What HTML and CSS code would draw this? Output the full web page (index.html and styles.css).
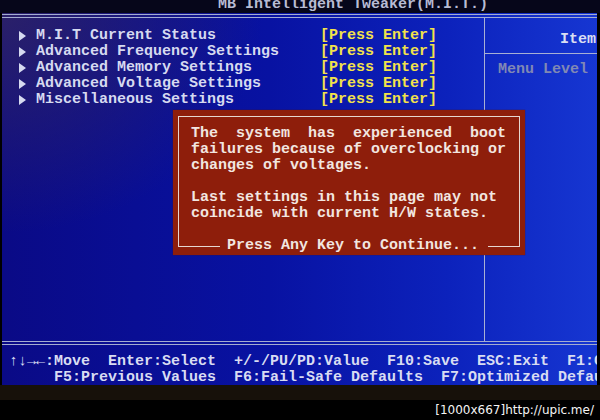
FILE: index.html
```html
<!DOCTYPE html>
<html>
<head>
<meta charset="utf-8">
<link rel="stylesheet" href="styles.css">
</head>
<body>
<div class="photo">
  <div class="titlebar"><span class="title">MB Intelligent Tweaker(M.I.T.)</span></div>
  <div class="panel">
    <div class="rule"></div>
    <div class="body">
      <div class="left">
        <ul class="menu">
          <li class="item"><svg class="tri" width="7" height="10" viewBox="0 0 7 10"><polygon points="0,0 7,5 0,10"/></svg><span class="label">M.I.T Current Status</span><span class="value">[Press Enter]</span></li>
          <li class="item"><svg class="tri" width="7" height="10" viewBox="0 0 7 10"><polygon points="0,0 7,5 0,10"/></svg><span class="label">Advanced Frequency Settings</span><span class="value">[Press Enter]</span></li>
          <li class="item"><svg class="tri" width="7" height="10" viewBox="0 0 7 10"><polygon points="0,0 7,5 0,10"/></svg><span class="label">Advanced Memory Settings</span><span class="value">[Press Enter]</span></li>
          <li class="item"><svg class="tri" width="7" height="10" viewBox="0 0 7 10"><polygon points="0,0 7,5 0,10"/></svg><span class="label">Advanced Voltage Settings</span><span class="value">[Press Enter]</span></li>
          <li class="item"><svg class="tri" width="7" height="10" viewBox="0 0 7 10"><polygon points="0,0 7,5 0,10"/></svg><span class="label">Miscellaneous Settings</span><span class="value">[Press Enter]</span></li>
        </ul>
      </div>
      <div class="right">
        <div class="help-head">Item Help</div>
        <div class="help-body">Menu Level</div>
      </div>
      <div class="dialog">
        <div class="frame">
<pre class="msg">The  system  has  experienced  boot
failures because of overclocking or
changes of voltages.

Last settings in this page may not
coincide with current H/W states.</pre>
        </div>
        <div class="foot"><span class="line line-l"></span><span class="prompt">Press Any Key to Continue...</span><span class="line line-r"></span></div>
      </div>
    </div>
    <div class="rule"></div>
    <div class="status">
<pre class="row">↑↓→←:Move  Enter:Select  +/-/PU/PD:Value  F10:Save  ESC:Exit  F1:General Help</pre>
<pre class="row">     F5:Previous Values  F6:Fail-Safe Defaults  F7:Optimized Defaults</pre>
    </div>
  </div>
  <div class="band"></div>
  <div class="watermark">[1000x667]http://upic.me/</div>
</div>
</body>
</html>
```
FILE: styles.css
```css
html, body {
  margin: 0;
  padding: 0;
  background: #000;
}
.photo {
  width: 600px;
  height: 420px;
  overflow: hidden;
  background: #000;
  font-family: "Liberation Mono", "DejaVu Sans Mono", monospace;
  font-weight: bold;
  font-size: 15px;
  color: #d6daf0;
}
.titlebar {
  height: 13px;
  background: #06061a;
  line-height: 9px;
  overflow: hidden;
  padding-left: 218px;
  color: #b8bcd4;
  white-space: pre;
}
.panel {
  margin: 0 3px 0 2px;
  height: 372px;
  background:
    radial-gradient(ellipse 260px 220px at 0 0, rgba(48, 36, 100, 0.85), rgba(48, 36, 100, 0) 100%),
    linear-gradient(90deg, #0a0a86 0%, #0812a2 45%, #0c22bc 75%, #1636d2 100%);
  overflow: hidden;
}
.rule {
  margin-top: 1px;
  height: 2px;
  border-top: 1px solid #a4acd0;
  border-bottom: 1px solid #a4acd0;
}
.body + .rule {
  margin-top: 0;
}
.body {
  position: relative;
  display: flex;
  height: 323px;
}
.left {
  width: 482px;
  flex: none;
}
.menu {
  list-style: none;
  margin: 0;
  padding: 10px 0 0 17px;
}
.item {
  display: grid;
  grid-template-columns: 17px 284px auto;
  align-items: center;
  height: 16px;
  line-height: 16px;
  white-space: pre;
}
.tri {
  fill: #d6daf0;
}
.value {
  color: #f2e24a;
}
.right {
  flex: 1;
  border-left: 1px solid #a8b0d4;
  overflow: hidden;
}
.help-head {
  height: 36px;
  box-sizing: border-box;
  padding: 14px 0 0 75px;
  line-height: 16px;
  border-bottom: 1px solid #a8b0d4;
  color: #dadef2;
  white-space: pre;
}
.help-body {
  padding: 8px 0 0 13px;
  line-height: 16px;
  color: #8088b4;
  white-space: pre;
}
.dialog {
  position: absolute;
  left: 171px;
  top: 92px;
  width: 352px;
  height: 145px;
  box-sizing: border-box;
  padding: 6px 5px 0 5px;
  background: #8e1e0b;
  color: #f2e6e0;
  box-shadow: 0 0 1px #5a1006;
}
.frame {
  height: 130px;
  box-sizing: border-box;
  border: 1px solid #e6d6d0;
  border-bottom: 0;
  padding: 9px 0 0 12px;
}
.msg {
  margin: 0;
  font: inherit;
  line-height: 16px;
  white-space: pre;
}
.foot {
  display: flex;
  align-items: center;
  height: 16px;
  margin-top: -8px;
  line-height: 16px;
}
.line {
  border-top: 1px solid #e6d6d0;
  height: 0;
}
.line-l {
  width: 42px;
}
.line-r {
  flex: 1;
}
.prompt {
  margin: 0 9px 0 7px;
  white-space: pre;
}
.status {
  padding-top: 9px;
}
.row {
  margin: 0;
  padding-left: 7px;
  font: inherit;
  line-height: 16px;
  white-space: pre;
  color: #d8dcf2;
}
.band {
  height: 15px;
  background: #17110a;
}
.watermark {
  height: 20px;
  line-height: 20px;
  text-align: right;
  padding-right: 6px;
  font-family: "DejaVu Sans", "Liberation Sans", sans-serif;
  font-weight: normal;
  font-size: 12px;
  color: #f4f4f4;
}
```
